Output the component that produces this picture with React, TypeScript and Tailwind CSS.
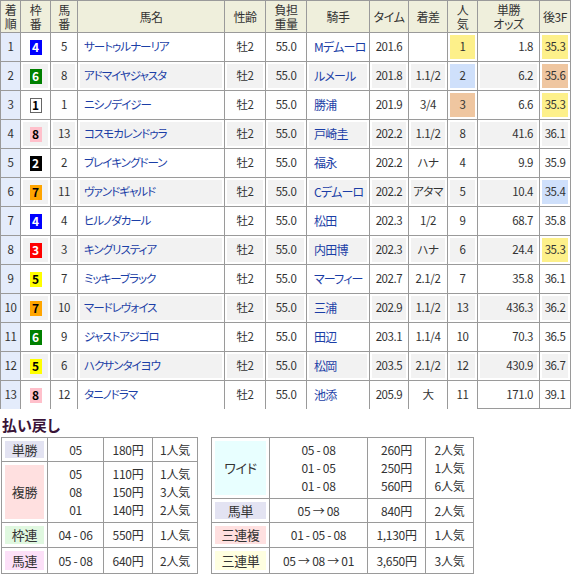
const font = "[font-family:'Noto_Sans_CJK_JP',sans-serif] [font-feature-settings:'palt']";

type Row = {
  rank: number;
  waku: number;
  uma: number;
  name: string;
  sex: string;
  weight: string;
  jockey: string;
  time: string;
  margin: string;
  pop: number;
  odds: string;
  last3f: string;
  popHl?: string;
  f3Hl?: string;
};

const YELLOW = "bg-[#fdf08a]";
const BLUE = "bg-[#cfe0fb]";
const PEACH = "bg-[#efc6a0]";

const rows: Row[] = [
  { rank: 1, waku: 4, uma: 5, name: "サートゥルナーリア", sex: "牡2", weight: "55.0", jockey: "Mデムーロ", time: "201.6", margin: "", pop: 1, odds: "1.8", last3f: "35.3", popHl: YELLOW, f3Hl: YELLOW },
  { rank: 2, waku: 6, uma: 8, name: "アドマイヤジャスタ", sex: "牡2", weight: "55.0", jockey: "ルメール", time: "201.8", margin: "1.1/2", pop: 2, odds: "6.2", last3f: "35.6", popHl: BLUE, f3Hl: PEACH },
  { rank: 3, waku: 1, uma: 1, name: "ニシノデイジー", sex: "牡2", weight: "55.0", jockey: "勝浦", time: "201.9", margin: "3/4", pop: 3, odds: "6.6", last3f: "35.3", popHl: PEACH, f3Hl: YELLOW },
  { rank: 4, waku: 8, uma: 13, name: "コスモカレンドゥラ", sex: "牡2", weight: "55.0", jockey: "戸崎圭", time: "202.2", margin: "1.1/2", pop: 8, odds: "41.6", last3f: "36.1" },
  { rank: 5, waku: 2, uma: 2, name: "ブレイキングドーン", sex: "牡2", weight: "55.0", jockey: "福永", time: "202.2", margin: "ハナ", pop: 4, odds: "9.9", last3f: "35.9" },
  { rank: 6, waku: 7, uma: 11, name: "ヴァンドギャルド", sex: "牡2", weight: "55.0", jockey: "Cデムーロ", time: "202.2", margin: "アタマ", pop: 5, odds: "10.4", last3f: "35.4", f3Hl: BLUE },
  { rank: 7, waku: 4, uma: 4, name: "ヒルノダカール", sex: "牡2", weight: "55.0", jockey: "松田", time: "202.3", margin: "1/2", pop: 9, odds: "68.7", last3f: "35.8" },
  { rank: 8, waku: 3, uma: 3, name: "キングリスティア", sex: "牡2", weight: "55.0", jockey: "内田博", time: "202.3", margin: "ハナ", pop: 6, odds: "24.4", last3f: "35.3", f3Hl: YELLOW },
  { rank: 9, waku: 5, uma: 7, name: "ミッキーブラック", sex: "牡2", weight: "55.0", jockey: "マーフィー", time: "202.7", margin: "2.1/2", pop: 7, odds: "35.8", last3f: "36.1" },
  { rank: 10, waku: 7, uma: 10, name: "マードレヴォイス", sex: "牡2", weight: "55.0", jockey: "三浦", time: "202.9", margin: "1.1/2", pop: 13, odds: "436.3", last3f: "36.2" },
  { rank: 11, waku: 6, uma: 9, name: "ジャストアジゴロ", sex: "牡2", weight: "55.0", jockey: "田辺", time: "203.1", margin: "1.1/4", pop: 10, odds: "70.3", last3f: "36.5" },
  { rank: 12, waku: 5, uma: 6, name: "ハクサンタイヨウ", sex: "牡2", weight: "55.0", jockey: "松岡", time: "203.5", margin: "2.1/2", pop: 12, odds: "430.9", last3f: "36.7" },
  { rank: 13, waku: 8, uma: 12, name: "タニノドラマ", sex: "牡2", weight: "55.0", jockey: "池添", time: "205.9", margin: "大", pop: 11, odds: "171.0", last3f: "39.1" },
];

const wakuStyle: Record<number, string> = {
  1: "bg-white text-black border border-[#666]",
  2: "bg-black text-white",
  3: "bg-[#ff0000] text-white",
  4: "bg-[#0000ff] text-white",
  5: "bg-[#ffff00] text-black",
  6: "bg-[#008000] text-white",
  7: "bg-[#ffa500] text-black",
  8: "bg-[#ffc0cb] text-black",
};

const headers = ["着\n順", "枠\n番", "馬\n番", "馬名", "性齢", "負担\n重量", "騎手", "タイム", "着差", "人\n気", "単勝\nオッズ", "後3F"];

function Cell({
  children,
  bg,
  align = "center",
  last,
  bottom,
}: {
  children?: React.ReactNode;
  bg: string;
  align?: "center" | "left" | "right";
  last?: boolean;
  bottom?: boolean;
}) {
  const justify = align === "left" ? "justify-start pl-[3px]" : align === "right" ? "justify-end pr-[4px]" : "justify-center";
  return (
    <div className={`h-[29px] border-l border-t border-[#9a9a9a] p-[2px] ${last ? "border-r" : ""} ${bottom ? "border-b" : ""}`}>
      <div className={`flex h-full items-center whitespace-nowrap ${justify} ${bg}`}>{children}</div>
    </div>
  );
}

function ResultTable() {
  return (
    <div className="grid grid-cols-[20px_30px_27px_147px_41px_41px_63px_39px_39px_30px_62px_32px] text-[11.5px] tracking-[-0.4px] text-[#333]">
      {headers.map((h, i) => (
        <div
          key={h}
          className={`flex h-[32px] items-center justify-center whitespace-pre-line border-l border-t border-[#9a9a9a] bg-[#efefdc] text-center text-[12px] leading-[14px] text-[#333] ${i === 11 ? "border-r" : ""}`}
        >
          {h}
        </div>
      ))}
      {rows.map((r, idx) => {
        const grey = idx % 2 === 1 ? "bg-[#f2f2f2]" : "bg-white";
        const lastRow = idx === rows.length - 1;
        return [
          <div key={`${r.rank}-a`} className="flex h-[29px] items-center justify-center border-l border-t border-[#9a9a9a] bg-[#e4ecfb] text-[#333]">
            {r.rank}
          </div>,
          <Cell key={`${r.rank}-b`} bg={grey}>
            <span className={`flex h-[15px] w-[12px] items-center justify-center text-[12px] font-bold leading-none tracking-normal ${wakuStyle[r.waku]}`}>
              {r.waku}
            </span>
          </Cell>,
          <Cell key={`${r.rank}-c`} bg={grey}>{r.uma}</Cell>,
          <Cell key={`${r.rank}-d`} bg={grey} align="left">
            <span className="pl-[1px] tracking-[-1px] text-[#1b3ea6]">{r.name}</span>
          </Cell>,
          <Cell key={`${r.rank}-e`} bg={grey}>{r.sex}</Cell>,
          <Cell key={`${r.rank}-f`} bg={grey}>{r.weight}</Cell>,
          <Cell key={`${r.rank}-g`} bg={grey} align="left">
            <span className="pl-[2px] tracking-[-0.8px] text-[12px] text-[#1b3ea6]">{r.jockey}</span>
          </Cell>,
          <Cell key={`${r.rank}-h`} bg={grey}>{r.time}</Cell>,
          <Cell key={`${r.rank}-i`} bg={grey}>{r.margin}</Cell>,
          <Cell key={`${r.rank}-j`} bg={r.popHl ?? grey}>{r.pop}</Cell>,
          <Cell key={`${r.rank}-k`} bg={grey} align="right" bottom={lastRow}>{r.odds}</Cell>,
          <Cell key={`${r.rank}-l`} bg={r.f3Hl ?? grey} last bottom={lastRow}>{r.last3f}</Cell>,
        ];
      })}
    </div>
  );
}

type Pay = { label: string; color: string; combos: string[]; yen: string[]; pops: string[]; h: string };

const leftPay: Pay[] = [
  { label: "単勝", color: "bg-[#e3e3f2]", combos: ["05"], yen: ["180円"], pops: ["1人気"], h: "h-[24px]" },
  { label: "複勝", color: "bg-[#ffe0e0]", combos: ["05", "08", "01"], yen: ["110円", "150円", "140円"], pops: ["1人気", "3人気", "2人気"], h: "h-[61px]" },
  { label: "枠連", color: "bg-[#e0f8e0]", combos: ["04 - 06"], yen: ["550円"], pops: ["1人気"], h: "h-[25px]" },
  { label: "馬連", color: "bg-[#fce0f8]", combos: ["05 - 08"], yen: ["640円"], pops: ["2人気"], h: "h-[26px]" },
];

const rightPay: Pay[] = [
  { label: "ワイド", color: "bg-[#e8ffff]", combos: ["05 - 08", "01 - 05", "01 - 08"], yen: ["260円", "250円", "560円"], pops: ["2人気", "1人気", "6人気"], h: "h-[61px]" },
  { label: "馬単", color: "bg-[#e3e3f2]", combos: ["05 → 08"], yen: ["840円"], pops: ["2人気"], h: "h-[24px]" },
  { label: "三連複", color: "bg-[#ffe0e0]", combos: ["01 - 05 - 08"], yen: ["1,130円"], pops: ["1人気"], h: "h-[25px]" },
  { label: "三連単", color: "bg-[#ffffe0]", combos: ["05 → 08 → 01"], yen: ["3,650円"], pops: ["3人気"], h: "h-[26px]" },
];

function PayTable({ data, cols }: { data: Pay[]; cols: string }) {
  return (
    <div className={`grid ${cols} border-b border-r border-[#9a9a9a] text-[12px] leading-[18px] tracking-[-0.3px] text-[#333]`}>
      {data.map((p) => [
        <div key={`${p.label}-l`} className={`${p.h} border-l border-t border-[#9a9a9a] p-[3px]`}>
          <div className={`flex h-full items-center justify-center text-[13px] ${p.color}`}>{p.label}</div>
        </div>,
        <div key={`${p.label}-c`} className={`${p.h} flex flex-col items-center justify-center border-l border-t border-[#9a9a9a]`}>
          {p.combos.map((c) => (
            <span key={c}>{c}</span>
          ))}
        </div>,
        <div key={`${p.label}-y`} className={`${p.h} flex flex-col items-center justify-center border-l border-t border-[#9a9a9a]`}>
          {p.yen.map((c) => (
            <span key={c}>{c}</span>
          ))}
        </div>,
        <div key={`${p.label}-p`} className={`${p.h} flex flex-col items-center justify-center border-l border-t border-[#9a9a9a]`}>
          {p.pops.map((c, i) => (
            <span key={i}>{c}</span>
          ))}
        </div>,
      ])}
    </div>
  );
}

export default function App() {
  return (
    <div className={`h-[574px] w-[572px] overflow-hidden bg-white ${font}`}>
      <ResultTable />
      <div className="mt-[7px] pl-[2px] text-[15px] font-bold leading-[18px] text-[#3a1438]">払い戻し</div>
      <div className="mt-[3px] flex items-start">
        <div className="ml-[1px]">
          <PayTable data={leftPay} cols="grid-cols-[46px_56px_49px_45px]" />
        </div>
        <div className="ml-[13px]">
          <PayTable data={rightPay} cols="grid-cols-[58px_98px_58px_48px]" />
        </div>
      </div>
    </div>
  );
}
